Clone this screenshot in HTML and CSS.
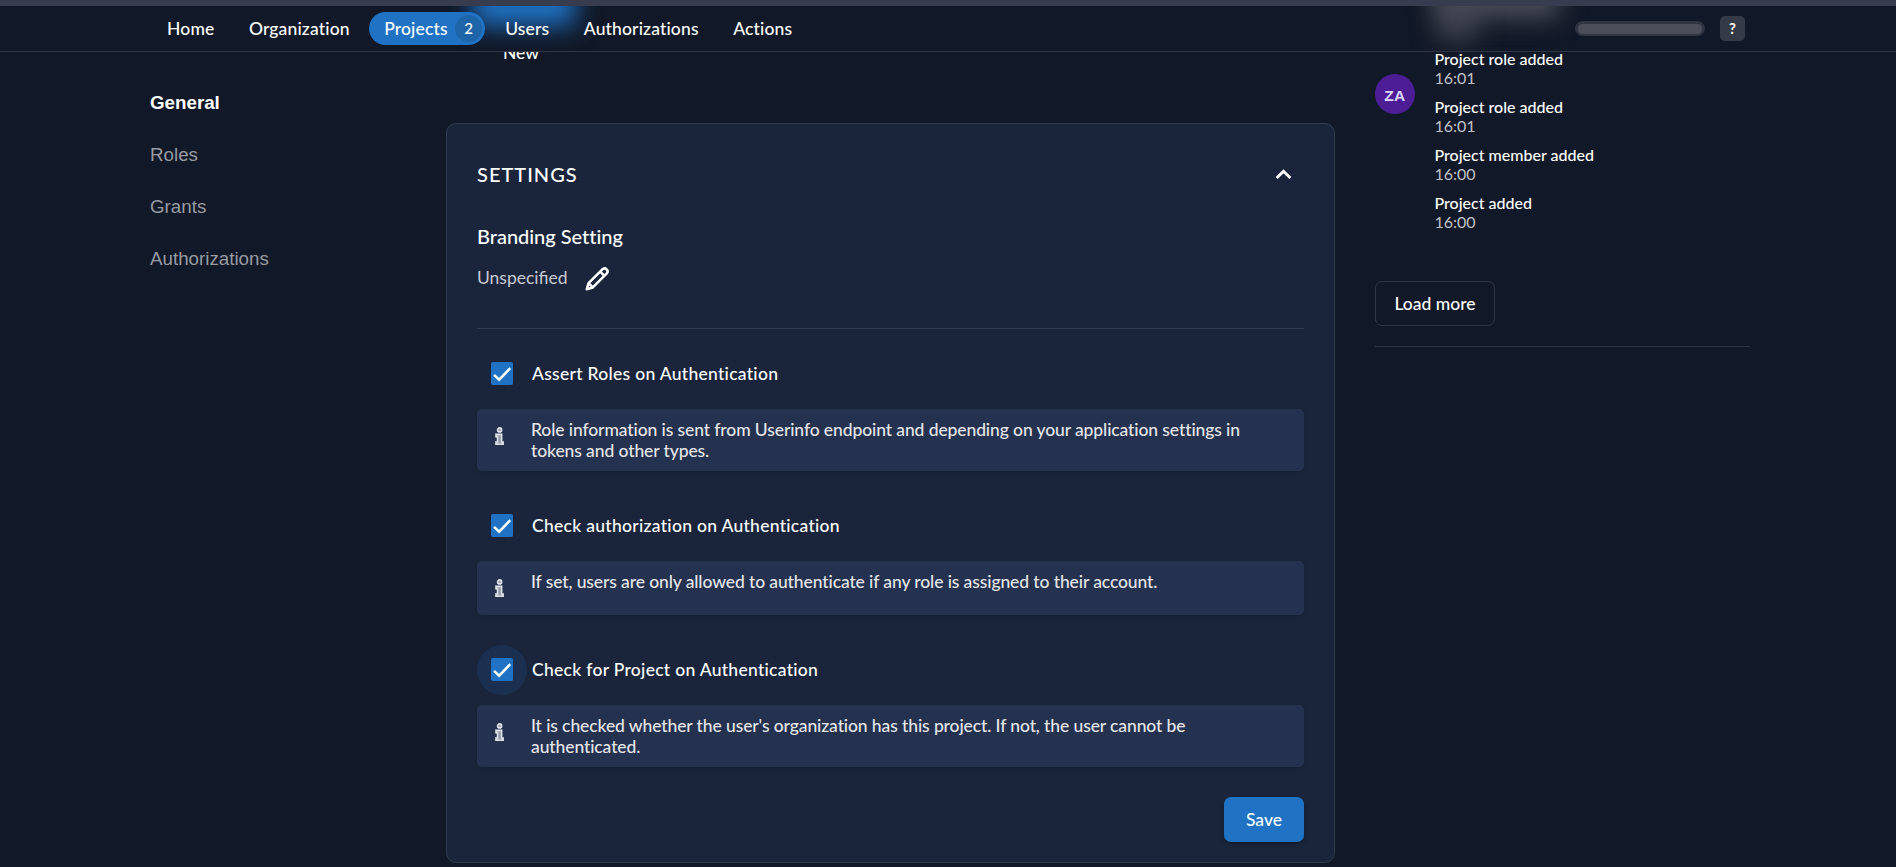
FILE: index.html
```html
<!DOCTYPE html>
<html lang="en">
<head>
<meta charset="utf-8">
<title>Project settings</title>
<link rel="stylesheet" href="styles.css">
</head>
<body>
<svg class="sprite" aria-hidden="true">
  <symbol id="tick" viewBox="0 0 24 24"><path d="M3.300 12.900 8.900 18.200 21 5.600" fill="none" stroke="currentColor" stroke-width="2.700"/></symbol>
  <symbol id="info" viewBox="0 0 9 18"><path d="M4.600.900a2 2 0 1 1 0 4 2 2 0 0 1 0-4ZM1 7.400h5.600v7.600H8.100v2.300H1V15h1.600V9.700H1Z" fill="#8d96a8" stroke="currentColor" stroke-width="1.650"/></symbol>
</svg>

<header class="topbar">
  <div class="glow glow-blue"></div>
  <div class="glow glow-grey"></div>
  <div class="glow glow-grey-low"></div>
  <nav class="nav">
    <a class="nav-item">Home</a>
    <a class="nav-item">Organization</a>
    <a class="nav-item active">Projects<span class="count">2</span></a>
    <a class="nav-item">Users</a>
    <a class="nav-item">Authorizations</a>
    <a class="nav-item">Actions</a>
  </nav>
  <div class="tools">
    <div class="loader"></div>
    <button class="help">?</button>
  </div>
</header>

<main class="page">
  <aside class="side">
    <a class="side-item selected">General</a>
    <a class="side-item">Roles</a>
    <a class="side-item">Grants</a>
    <a class="side-item">Authorizations</a>
  </aside>

  <section class="content">
    <div class="new-label">New</div>
    <div class="card">
      <div class="card-head">
        <h2 class="card-title">SETTINGS</h2>
        <svg class="chevron" viewBox="0 0 17 11"><path d="M1.700 9 8.500 2.300 15.300 9" fill="none" stroke="currentColor" stroke-width="2.900"/></svg>
      </div>
      <h3 class="branding">Branding Setting</h3>
      <div class="brand-row">
        <span>Unspecified</span>
        <svg class="pencil" viewBox="0 0 32 32"><path d="M5.100 26.900 7 20.500 22 5.500a3.200 3.200 0 0 1 4.500 4.500L11.500 25ZM19.400 8.100l4.500 4.500M7 20.500l4.500 4.500" fill="none" stroke="currentColor" stroke-width="2.700" stroke-linejoin="round"/></svg>
      </div>
      <hr class="rule">

      <label class="check"><span class="ring"><span class="box"><svg class="tick"><use href="#tick"/></svg></span></span>Assert Roles on Authentication</label>
      <div class="note"><span class="note-icon"><svg class="info"><use href="#info"/></svg></span><p class="note-text">Role information is sent from Userinfo endpoint and depending on your application settings in tokens and other types.</p></div>

      <label class="check"><span class="ring"><span class="box"><svg class="tick"><use href="#tick"/></svg></span></span>Check authorization on Authentication</label>
      <div class="note"><span class="note-icon"><svg class="info"><use href="#info"/></svg></span><p class="note-text">If set, users are only allowed to authenticate if any role is assigned to their account.</p></div>

      <label class="check"><span class="ring focused"><span class="box"><svg class="tick"><use href="#tick"/></svg></span></span>Check for Project on Authentication</label>
      <div class="note"><span class="note-icon"><svg class="info"><use href="#info"/></svg></span><p class="note-text">It is checked whether the user's organization has this project. If not, the user cannot be authenticated.</p></div>

      <div class="actions"><button class="save">Save</button></div>
    </div>
  </section>

  <aside class="history">
    <div class="history-row">
      <div class="avatar">ZA</div>
      <div class="events">
        <div class="event"><span class="event-name">Project role added</span><span class="event-time">16:01</span></div>
        <div class="event"><span class="event-name">Project role added</span><span class="event-time">16:01</span></div>
        <div class="event"><span class="event-name">Project member added</span><span class="event-time">16:00</span></div>
        <div class="event"><span class="event-name">Project added</span><span class="event-time">16:00</span></div>
      </div>
    </div>
    <button class="load-more">Load more</button>
    <hr class="history-rule">
  </aside>
</main>
</body>
</html>
```
FILE: styles.css
```css
* { box-sizing: border-box; margin: 0; }

body {
  height: 867px;
  overflow: hidden;
  background: #111827;
  color: #fff;
  font-family: Lato, sans-serif;
  font-size: 17.5px;
}

button { font-family: inherit; color: inherit; border: 0; padding: 0; }

.sprite { position: absolute; width: 0; height: 0; }

/* Header */
.topbar {
  position: relative;
  z-index: 1;
  display: flex;
  justify-content: space-between;
  height: 52px;
  padding: 0 151px 0 167px;
  overflow: hidden;
  background: #111827;
  border-top: 6px solid #383c4f;
  border-bottom: 1px solid #303643;
}

.glow { position: absolute; filter: blur(12px); }
.glow-blue { left: 473px; top: -40px; width: 102px; height: 60px; background: #1f70c1; }
.glow-grey { left: 1434px; top: -30px; width: 125px; height: 42px; background: #4b4e59; }
.glow-grey-low { left: 1436px; top: -4px; width: 42px; height: 40px; background: #4b4e59aa; }

.nav { position: relative; display: flex; align-items: center; letter-spacing: .15px; font-weight: 500; }
.nav-item { margin-right: 34.5px; line-height: 33px; }
.active {
  display: flex;
  align-items: center;
  height: 33px;
  margin: 0 20px 0 -15px;
  width: 116px;
  padding-left: 15px;
  justify-content: space-between;
  padding-right: 3px;
  border-radius: 17px;
  background: #2073c4;
}
.count {
  width: 27px;
  height: 27px;
  border-radius: 50%;
  background: #1e64a8;
  font-size: 15px;
  line-height: 27px;
  text-align: center;
}

.tools { position: relative; display: flex; align-items: center; gap: 15px; }
.loader { width: 130px; height: 15px; border: 3px solid #303542; border-bottom-width: 2px; border-radius: 8px; background: #4b4e59; }
.help { width: 25px; height: 25px; border-radius: 5px; background: #353a47; font-size: 15px; font-weight: 700; line-height: 25px; }

/* Page columns */
.page { display: flex; height: 815px; }

.side {
  display: flex;
  flex-direction: column;
  gap: 30px;
  width: 296px;
  margin-left: 150px;
  padding-top: 40px;
  font-family: "Liberation Sans", Arial, sans-serif;
  font-size: 18.75px;
}
.side-item { line-height: 22px; color: #989ba2; }
.selected { color: #fff; font-weight: 700; }

.content { width: 889px; }
.new-label { margin: -10px 0 61px 57px; height: 20px; line-height: 21px; font-weight: 500; }

.card {
  height: 740px;
  padding: 29px 30px 30px;
  border: 1px solid #313c4f;
  border-radius: 10px;
  background: #1a253c;
}
.card-head { display: flex; align-items: center; justify-content: space-between; height: 42px; }
.card-title { font-size: 20px; font-weight: 500; letter-spacing: 1px; line-height: 24px; }
.chevron { width: 17px; height: 11px; margin-right: 12px; }
.branding { margin-top: 29px; font-size: 20px; font-weight: 500; line-height: 24px; letter-spacing: -.02px; }
.brand-row { display: flex; align-items: center; gap: 14px; height: 50px; margin-top: 4px; color: #c6c9d0; }
.pencil { width: 30px; height: 30px; margin-top: 3px; color: #fff; }
.rule { height: 1px; margin: 26px 0 20px; border: 0; background: #313c4f; }

.check { display: flex; align-items: center; gap: 5px; height: 50px; padding-bottom: 2px; font-weight: 500; letter-spacing: .29px; }
.ring { display: grid; place-items: center; width: 50px; height: 50px; margin-bottom: -2px; padding-bottom: 1px; border-radius: 50%; }
.focused { background: #1b3050; }
.box { display: grid; place-items: center; width: 22px; height: 23px; border-radius: 2px; background: #2073c4; }
.tick { width: 22px; height: 22px; }

.note {
  display: flex;
  margin: 10px 0 30px;
  padding: 10px 60px 10px 0;
  border-radius: 5px;
  background: #24314f;
  color: #e4e6ea;
  box-shadow: 0 2px 5px #0000001a;
}
.note-icon { display: grid; place-items: center; flex: none; width: 54px; height: 34px; padding-right: 10px; }
.info { width: 9px; height: 18px; }
.note-text { line-height: 21px; letter-spacing: -.105px; font-weight: 500; }

.actions { display: flex; justify-content: flex-end; }
.save { width: 80px; height: 45px; border-radius: 7px; background: #2073c4; font-size: 17.5px; font-weight: 500; box-shadow: 0 2px 4px #00000055; }

/* Activity column */
.history { width: 375px; margin-left: 40px; }
.history-row { display: flex; gap: 19.500px; height: 229px; }
.avatar {
  width: 40px;
  height: 40px;
  margin-top: 22px;
  border-radius: 50%;
  background: #4c1d95;
  color: #ddd6fe;
  font: 700 15.5px/43px "Liberation Sans", Arial, sans-serif;
  letter-spacing: .5px;
  text-align: center;
}
.events { display: flex; flex-direction: column; gap: 10px; margin-top: -3px; font-size: 16px; line-height: 19px; }
.event { display: flex; flex-direction: column; }
.event-name { font-weight: 500; }
.event-time { color: #c0c2c7; }
.load-more { display: block; width: 120px; height: 45px; border: 1px solid #303643; border-radius: 7px; background: none; font-size: 17.5px; font-weight: 500; }
.history-rule { height: 1px; margin-top: 20px; border: 0; background: #303643; }
```
